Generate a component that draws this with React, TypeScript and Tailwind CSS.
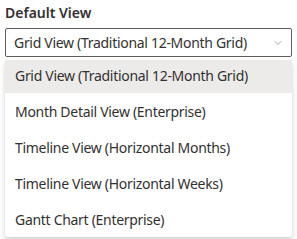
import { ChevronDown } from "lucide-react";

const options = [
  "Grid View (Traditional 12-Month Grid)",
  "Month Detail View (Enterprise)",
  "Timeline View (Horizontal Months)",
  "Timeline View (Horizontal Weeks)",
  "Gantt Chart (Enterprise)",
];

export default function App() {
  const selected = options[0];

  return (
    <div
      className="h-[239px] w-[297px] overflow-hidden bg-white text-[#323130]"
      style={{ fontFamily: '"Segoe UI", "Noto Sans", "Open Sans", sans-serif' }}
    >
      <div className="px-[5px] pt-[3px]">
        <label className="block pb-[5px] text-[14px] font-semibold leading-[20px]">
          Default View
        </label>
        <div className="flex h-[29px] items-center justify-between rounded-[2px] border border-[#605e5c] pl-[8px] pr-[7px]">
          <span className="text-[14px] leading-[20px] tracking-[-0.3px]">{selected}</span>
          <ChevronDown className="h-[12px] w-[12px] text-[#8a8886]" strokeWidth={1.5} />
        </div>
      </div>

      <div className="mx-[5px] mt-[3px] rounded-[3px] bg-white shadow-[0_3px_7px_rgba(0,0,0,0.13),0_1px_2px_rgba(0,0,0,0.11)]">
        {options.map((opt) => (
          <div
            key={opt}
            className={
              opt === selected
                ? "flex h-[33px] items-center bg-[#edebe9] px-[10px] pb-[3px] text-[14px]"
                : "flex h-[36px] items-center px-[10px] text-[14px]"
            }
          >
            <span className="tracking-[-0.3px]">{opt}</span>
          </div>
        ))}
      </div>
    </div>
  );
}
